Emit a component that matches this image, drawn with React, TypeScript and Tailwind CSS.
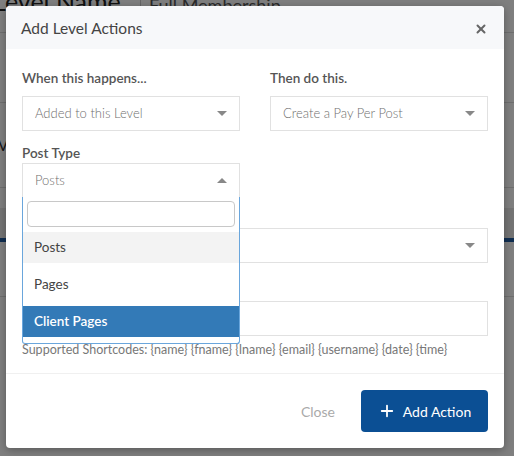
import React from 'react';
import { X, Plus } from 'lucide-react';

const font = "font-['Source_Sans_Pro','Lato','Liberation_Sans',sans-serif]";

const Caret: React.FC<{ up?: boolean }> = ({ up }) => (
  <svg width="10" height="5" viewBox="0 0 10 5" className="shrink-0">
    {up ? <path d="M0 5 L5 0 L10 5 Z" fill="#888" /> : <path d="M0 0 L10 0 L5 5 Z" fill="#888" />}
  </svg>
);

const Select: React.FC<{ value?: string; up?: boolean }> = ({ value, up }) => (
  <div className="flex h-[35px] items-center justify-between border border-[#e1e1e1] bg-white pl-[12px] pr-[12px]">
    <span className="text-[13px] font-light text-[#6f6f6f]">{value}</span>
    <Caret up={up} />
  </div>
);

const Label: React.FC<{ children: React.ReactNode; className?: string }> = ({ children, className }) => (
  <div className={`text-[13.5px] font-semibold leading-[18px] text-[#555] ${className ?? ''}`}>{children}</div>
);

const BackgroundPage: React.FC = () => (
  <div className="flex h-full flex-col bg-white">
    <div className="flex h-[33px] items-end border-b border-[#ddd]">
      <span className="-ml-[7px] mb-[18px] w-[147px] text-[25px] leading-none text-[#222]">Level Name</span>
      <span className="mb-[12px] h-[30px] border-l border-[#ccc]" />
      <span className="mb-[18px] ml-[8px] text-[18px] leading-none text-[#555]">Full Membership</span>
    </div>
    <div className="h-[70px] border-b border-[#ddd]" />
    <div className="flex h-[85px] items-center border-b border-[#ddd] text-[15px] text-[#333]">
      <span className="-ml-[2px]">V</span>
    </div>
    <div className="h-[20px]" />
    <div className="h-[30px] bg-[#e8e8e8]" />
    <div className="h-[4px] bg-[#1f5aa0]" />
    <div className="h-[55px] border-b border-[#ddd]" />
  </div>
);

export default function App() {
  return (
    <div className={`relative h-[456px] w-[514px] overflow-hidden ${font}`}>
      <BackgroundPage />
      <div className="absolute inset-0 bg-black/50" />

      <div className="absolute left-[6px] top-[6px] flex h-[442px] w-[498px] flex-col rounded-[4px] bg-white shadow-[0_2px_8px_rgba(0,0,0,0.3)]">
        <div className="flex h-[43px] items-center justify-between rounded-t-[4px] bg-[#f7f8fa] pl-[15px] pr-[16px] pt-[3px]">
          <span className="text-[15.5px] text-[#444]">Add Level Actions</span>
          <X size={14} strokeWidth={3.4} className="text-[#666]" />
        </div>

        <div className="flex flex-1 flex-col px-[16px] pt-[20px]">
          <div className="grid grid-cols-2 gap-x-[30px]">
            <div>
              <Label className="mb-[9px]">When this happens...</Label>
              <Select value="Added to this Level" />
            </div>
            <div>
              <Label className="mb-[9px]">Then do this.</Label>
              <Select value="Create a Pay Per Post" />
            </div>
          </div>

          <div className="mt-[13px] grid grid-cols-2 gap-x-[30px]">
            <div className="relative z-10">
              <Label className="mb-[1px]">Post Type</Label>
              <Select value="Posts" up />
              <div className="absolute left-0 right-0 top-[53px] flex h-[147px] flex-col rounded-b-[3px] border border-t-0 border-[#6aa6dc] bg-white">
                <div className="px-[4px] pb-[5px] pt-[4px]">
                  <div className="h-[26px] rounded-[4px] border border-[#c8c8c8] bg-white" />
                </div>
                <div className="flex h-[31px] items-center bg-[#f3f3f3] px-[11px] text-[13.5px] text-[#444]">Posts</div>
                <div className="flex h-[43px] items-center px-[11px] text-[13.5px] text-[#444]">Pages</div>
                <div className="flex h-[31px] items-center bg-[#337ab7] px-[11px] text-[13.5px] font-semibold text-white">
                  Client Pages
                </div>
              </div>
            </div>
          </div>

          <div className="mt-[11px]">
            <Label className="mb-[1px]">Pay Per Post</Label>
            <Select />
          </div>

          <div className="mt-[13px]">
            <Label className="mb-[7px]">Post Title</Label>
            <div className="h-[35px] border border-[#e1e1e1] bg-white" />
          </div>

          <div className="mt-[5px] text-[12.5px] leading-[18px] text-[#777]">
            Supported Shortcodes: {'{name} {fname} {lname} {email} {username} {date} {time}'}
          </div>
        </div>

        <div className="flex items-center justify-end gap-[26px] border-t border-[#f0f0f0] pb-[16px] pl-[16px] pr-[16px] pt-[16px]">
          <button className="text-[14px] text-[#aaa]">Close</button>
          <button className="flex h-[42px] w-[127px] items-center justify-center gap-[7px] rounded-[4px] bg-[#0b4f94] text-[14px] text-white">
            <Plus size={18} strokeWidth={2.4} />
            Add Action
          </button>
        </div>
      </div>
    </div>
  );
}
